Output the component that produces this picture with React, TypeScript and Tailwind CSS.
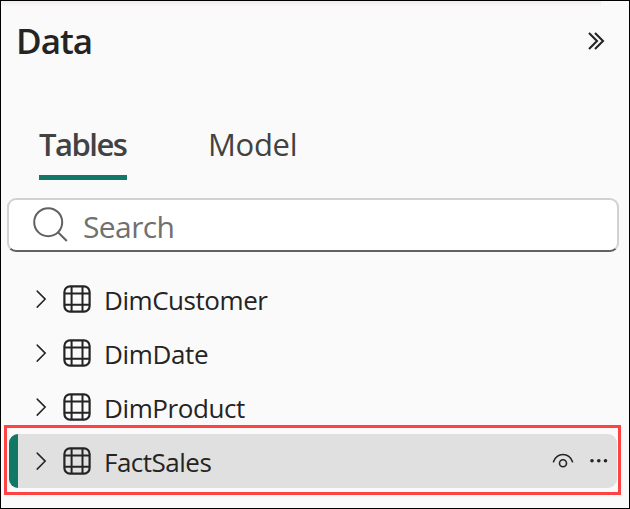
import React from "react";

function Chevron() {
  return (
    <svg className="ml-[18px] h-5 w-[14px] shrink-0" viewBox="0 0 14 20" fill="none" stroke="#242424" strokeWidth="1.5" strokeLinecap="round">
      <path d="M1.2 2.1 L9.2 10.1 L1.2 18.1" />
    </svg>
  );
}

function TableIcon() {
  return (
    <svg className="ml-[13px] h-7 w-7 shrink-0" viewBox="0 0 28 28" fill="none" stroke="#242424" strokeWidth="2">
      <rect x="1.4" y="1.4" width="25.2" height="25.2" rx="5.6" strokeWidth="2.2" />
      <path d="M8.6 1V27M19.5 1V27M1 8.6H27M1 19.8H27" />
    </svg>
  );
}

function Row({ name, spacing, selected = false }: { name: string; spacing: string; selected?: boolean }) {
  return (
    <div className={`flex h-[54px] items-center overflow-hidden rounded-[9px] ${selected ? "bg-[#e0e0e0]" : ""}`}>
      <span className={`h-full w-[9px] shrink-0 ${selected ? "bg-[#117865]" : ""}`} />
      <Chevron />
      <TableIcon />
      <span className={`ml-[13px] mt-[2px] whitespace-nowrap text-[26px] leading-9 text-[#242424] ${spacing}`}>{name}</span>
      {selected && (
        <span className="ml-auto mr-[8px] flex items-center gap-[15px]">
          <svg className="h-5 w-[22px]" viewBox="0 0 22 20" fill="none" stroke="#242424" strokeWidth="1.6" strokeLinecap="round">
            <path d="M1.5 10.7C3.2 6.2 6.8 3.5 11 3.5s7.8 2.7 9.5 7.2" />
            <circle cx="11" cy="12.3" r="3.5" />
          </svg>
          <svg className="h-5 w-5" viewBox="0 0 20 20" fill="#242424">
            <circle cx="3" cy="9.7" r="1.8" />
            <circle cx="9.8" cy="9.7" r="1.8" />
            <circle cx="16.5" cy="9.7" r="1.8" />
          </svg>
        </span>
      )}
    </div>
  );
}

export default function App() {
  return (
    <main className="relative flex h-[509px] w-[630px] flex-col overflow-hidden border border-black bg-[#fafafa] font-['Open_Sans','Noto_Sans',sans-serif]">
      <div className="h-[6px] w-[600px] shrink-0 bg-linear-to-b from-[#f1ebf0] to-[#fafafa]" />
      <header className="flex h-[68px] shrink-0 items-center justify-between pl-[15px] pr-[22px]">
        <h1 className="text-[35px] font-semibold leading-[48px] tracking-[-1px] text-[#242424]">Data</h1>
        <svg className="h-5 w-[19px]" viewBox="0 0 19 20" fill="none" stroke="#242424" strokeWidth="2.1">
          <path d="M1 2L9 10L1 18M7 2L15 10L7 18" />
        </svg>
      </header>
      <nav className="mt-[45px] flex h-[60px] shrink-0 gap-[81px] pl-[38px] text-[31px] leading-[48px] text-[#424242]">
        <span className="h-[60px] w-[88px] whitespace-nowrap border-b-[5px] border-[#117865] font-semibold tracking-[-1.5px]">Tables</span>
        <span className="whitespace-nowrap tracking-[-0.3px]">Model</span>
      </nav>
      <div className="ml-[6px] mt-[18px] flex h-[54px] w-[612px] shrink-0 items-center rounded-[9px] border-2 border-[#d1d1d1] border-b-[#616161] bg-white">
        <svg className="ml-[23px] h-9 w-9" viewBox="0 0 36 36" fill="none" stroke="#616161" strokeWidth="2">
          <circle cx="16.2" cy="15.2" r="14" />
          <path d="M26 25.2L34.8 34" />
        </svg>
        <span className="ml-[15px] mt-[4px] text-[30px] leading-9 tracking-[-0.6px] text-[#707070]">Search</span>
      </div>
      <section className="ml-[8px] mt-[20px] w-[608px]">
        <Row name="DimCustomer" spacing="tracking-[-0.45px]" />
        <Row name="DimDate" spacing="tracking-[-0.35px]" />
        <Row name="DimProduct" spacing="tracking-[-0.4px]" />
        <Row name="FactSales" spacing="tracking-[-0.5px]" selected />
      </section>
      <div className="pointer-events-none absolute left-[3px] top-[424px] h-[70px] w-[617px] border-3 border-[#ff4343]" />
    </main>
  );
}
